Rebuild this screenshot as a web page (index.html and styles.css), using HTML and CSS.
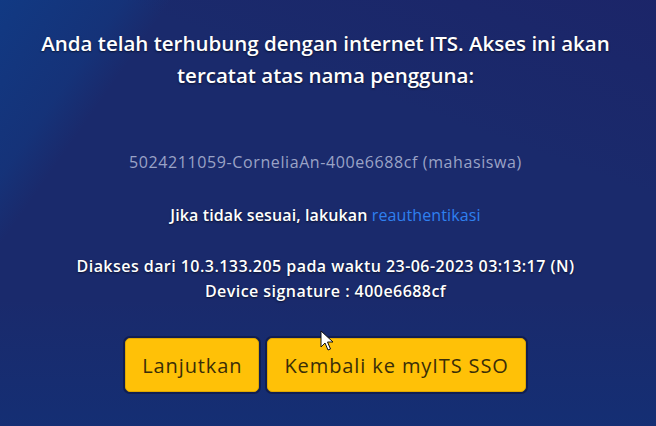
FILE: index.html
```html
<!DOCTYPE html>
<html lang="id">
<head>
<meta charset="utf-8">
<title>myITS Hotspot</title>
<link rel="stylesheet" href="styles.css">
</head>
<body>
<main class="page">
  <p class="lead">Anda telah terhubung dengan internet ITS. Akses ini akan tercatat atas nama pengguna:</p>
  <p class="user">5024211059-CorneliaAn-400e6688cf (mahasiswa)</p>
  <p class="note">Jika tidak sesuai, lakukan <a class="link" href="#">reauthentikasi</a></p>
  <div class="info">
    <p>Diakses dari 10.3.133.205 pada waktu 23-06-2023 03:13:17 (N)</p>
    <p>Device signature : 400e6688cf</p>
  </div>
  <div class="actions">
    <button class="btn" type="button">Lanjutkan</button>
    <button class="btn" type="button">Kembali ke myITS SSO</button>
  </div>
</main>
<svg class="cursor" width="14" height="22" viewBox="0 0 14 22" aria-hidden="true">
  <path d="M1 1 L1 17 L5 13 L8 20 L10.5 19 L7.5 12 L13 12 Z" fill="#ffffff" stroke="#111" stroke-width="1" stroke-linejoin="round"/>
</svg>
</body>
</html>
```
FILE: styles.css
```css
html, body {
  margin: 0;
  height: 100%;
}
body {
  background-color: #1a2a6c;
  background-image:
    linear-gradient(125deg, rgba(10, 70, 150, 0.55) 0%, rgba(10, 70, 150, 0.3) 13%, rgba(10, 70, 150, 0) 18%),
    linear-gradient(200deg, rgba(30, 30, 100, 0.4) 0%, rgba(30, 30, 100, 0) 30%),
    linear-gradient(0deg, rgba(10, 55, 130, 0.35) 0%, rgba(10, 55, 130, 0) 30%);
  font-family: "Open Sans", Lato, sans-serif;
  color: #ffffff;
  overflow: hidden;
  position: relative;
}
.page {
  display: flex;
  flex-direction: column;
  align-items: center;
  text-align: center;
  padding: 27px 32px 0 27px;
}
p {
  margin: 0;
}
.lead {
  font-size: 20.5px;
  font-weight: 600;
  line-height: 32px;
  max-width: 590px;
  text-shadow: 0 1px 2px rgba(0, 0, 0, 0.6);
}
.user {
  margin-top: 61px;
  font-size: 16px;
  letter-spacing: 0.6px;
  font-weight: 400;
  color: #9aa3c6;
  line-height: 20px;
}
.note {
  margin-top: 33px;
  font-size: 16px;
  letter-spacing: 0.12px;
  font-weight: 600;
  line-height: 20px;
  text-shadow: 0 1px 2px rgba(0, 0, 0, 0.6);
}
.link {
  color: #2f80f0;
  font-weight: 400;
  text-decoration: none;
  text-shadow: none;
}
.info {
  margin-top: 29px;
  font-size: 16px;
  letter-spacing: 0.45px;
  font-weight: 600;
  line-height: 25px;
  text-shadow: 0 1px 2px rgba(0, 0, 0, 0.6);
}
.actions {
  margin-top: 34px;
  display: flex;
  gap: 8px;
}
.btn {
  background: #ffc107;
  border: 1px solid #e0a800;
  border-radius: 5px;
  color: #3a2e08;
  font-family: "Open Sans", Lato, sans-serif;
  font-size: 20px;
  letter-spacing: 0.9px;
  height: 54px;
  padding: 0 16px;
  box-shadow: 0 0 0 2px rgba(10, 15, 50, 0.5);
}
.cursor {
  position: absolute;
  left: 320px;
  top: 330px;
}
```
